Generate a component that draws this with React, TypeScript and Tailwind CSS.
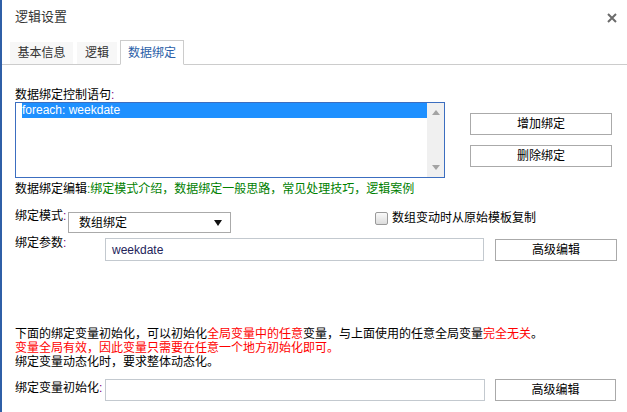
import React from 'react';

const font = { fontFamily: '"Liberation Sans", "Noto Sans CJK SC", sans-serif' };

const Colon: React.FC<{ className?: string }> = ({ className = 'text-[#800080]' }) => (
  <span className={className}>:</span>
);

const PlainButton: React.FC<{ label: string; className?: string }> = ({ label, className = '' }) => (
  <button
    type="button"
    className={`h-[22px] border border-[#aaaaaa] bg-white text-[12px] leading-[14px] text-black flex items-center justify-center ${className}`}
  >
    {label}
  </button>
);

export default function App() {
  return (
    <div
      className="w-[627px] h-[412px] bg-white border-l-2 border-[#2f5fa7] overflow-hidden text-black"
      style={font}
    >
      {/* header */}
      <div className="h-[40px] flex items-start justify-between pt-[9px] pl-[13px] pr-[10px]">
        <span className="text-[13px] leading-[16px] text-[#333333]">逻辑设置</span>
        <svg width="10" height="10" viewBox="0 0 10 10" className="mt-[4px]">
          <path d="M1 1 L9 9 M9 1 L1 9" stroke="#6b6b6b" strokeWidth="2" />
        </svg>
      </div>

      {/* tabs */}
      <div className="h-[25px] flex items-end border-b border-[#cccccc] pl-[8px] text-[12px]">
        <div className="w-[63px] h-[22px] bg-[#f7f7f7] flex items-center justify-center text-[#333333]">基本信息</div>
        <div className="w-[40px] h-[22px] ml-[4px] bg-[#f7f7f7] flex items-center justify-center text-[#333333]">逻辑</div>
        <div className="w-[64px] h-[25px] ml-[3px] -mb-px bg-white border border-[#cccccc] border-b-white flex items-center justify-center text-[#2a5ea8]">
          数据绑定
        </div>
      </div>

      <div className="pl-[13px] text-[12px] leading-[14px]">
        <div className="mt-[23px]">
          数据绑定控制语句<Colon />
        </div>

        <div className="flex">
          <div className="w-[430px] h-[76px] border border-[#3c6ec0] flex">
            <div className="flex-1 pl-[6px]">
              <div className="h-[15px] bg-[#1e90ff] text-white leading-[15px]">foreach: weekdate</div>
            </div>
            <div className="w-[17px] bg-[#f0f0f0] flex flex-col items-center justify-between py-[7px]">
              <svg width="8" height="5" viewBox="0 0 8 5">
                <path d="M0 5 L4 0 L8 5 Z" fill="#a3a3a3" />
              </svg>
              <svg width="8" height="5" viewBox="0 0 8 5">
                <path d="M0 0 L8 0 L4 5 Z" fill="#a3a3a3" />
              </svg>
            </div>
          </div>
          <div className="ml-[25px] pt-[11px] flex flex-col gap-[10px]">
            <PlainButton label="增加绑定" className="w-[142px]" />
            <PlainButton label="删除绑定" className="w-[142px]" />
          </div>
        </div>

        <div className="mt-[4px]">
          数据绑定编辑<Colon className="text-[#008000]" />
          <span className="text-[#008000]">绑定模式介绍，数据绑定一般思路，常见处理技巧，逻辑案例</span>
        </div>

        {/* mode row */}
        <div className="mt-[13px] flex items-start">
          <div className="w-[53px]">
            绑定模式<Colon />
          </div>
          <div className="mt-[3px] w-[163px] h-[21px] border border-[#aaaaaa] flex items-center justify-between pl-[10px] pr-[8px]">
            <span>数组绑定</span>
            <svg width="8" height="6" viewBox="0 0 8 6">
              <path d="M0 0 L8 0 L4 6 Z" fill="#111111" />
            </svg>
          </div>
          <div className="ml-[144px] mt-[2px] flex items-center">
            <span className="w-[13px] h-[13px] rounded-[2px] border border-[#9a9a9a] bg-gradient-to-b from-[#fafafa] to-[#dcdcdc]" />
            <span className="ml-[4px]">数组变动时从原始模板复制</span>
          </div>
        </div>

        {/* param row */}
        <div className="mt-[3px] flex items-start">
          <div className="w-[90px]">
            绑定参数<Colon />
          </div>
          <div className="mt-[2px] w-[379px] h-[23px] border border-[#c3c9cf] flex items-center pl-[6px] text-[#23235a]">
            weekdate
          </div>
          <PlainButton label="高级编辑" className="ml-[11px] mt-[3px] w-[122px]" />
        </div>

        {/* notes */}
        <div className="mt-[66px]">
          <div>
            下面的绑定变量初始化，可以初始化<span className="text-[#ff0000]">全局变量中的任意</span>
            变量，与上面使用的任意全局变量<span className="text-[#ff0000]">完全无关</span>。
          </div>
          <div className="text-[#ff0000]">变量全局有效，因此变量只需要在任意一个地方初始化即可。</div>
          <div>绑定变量动态化时，要求整体动态化。</div>
        </div>

        {/* init row */}
        <div className="mt-[10px] flex items-start">
          <div className="w-[90px] mt-[2px]">
            绑定变量初始化<Colon />
          </div>
          <div className="w-[380px] h-[22px] border border-[#c3c9cf]" />
          <PlainButton label="高级编辑" className="ml-[10px] w-[121px]" />
        </div>
      </div>
    </div>
  );
}
